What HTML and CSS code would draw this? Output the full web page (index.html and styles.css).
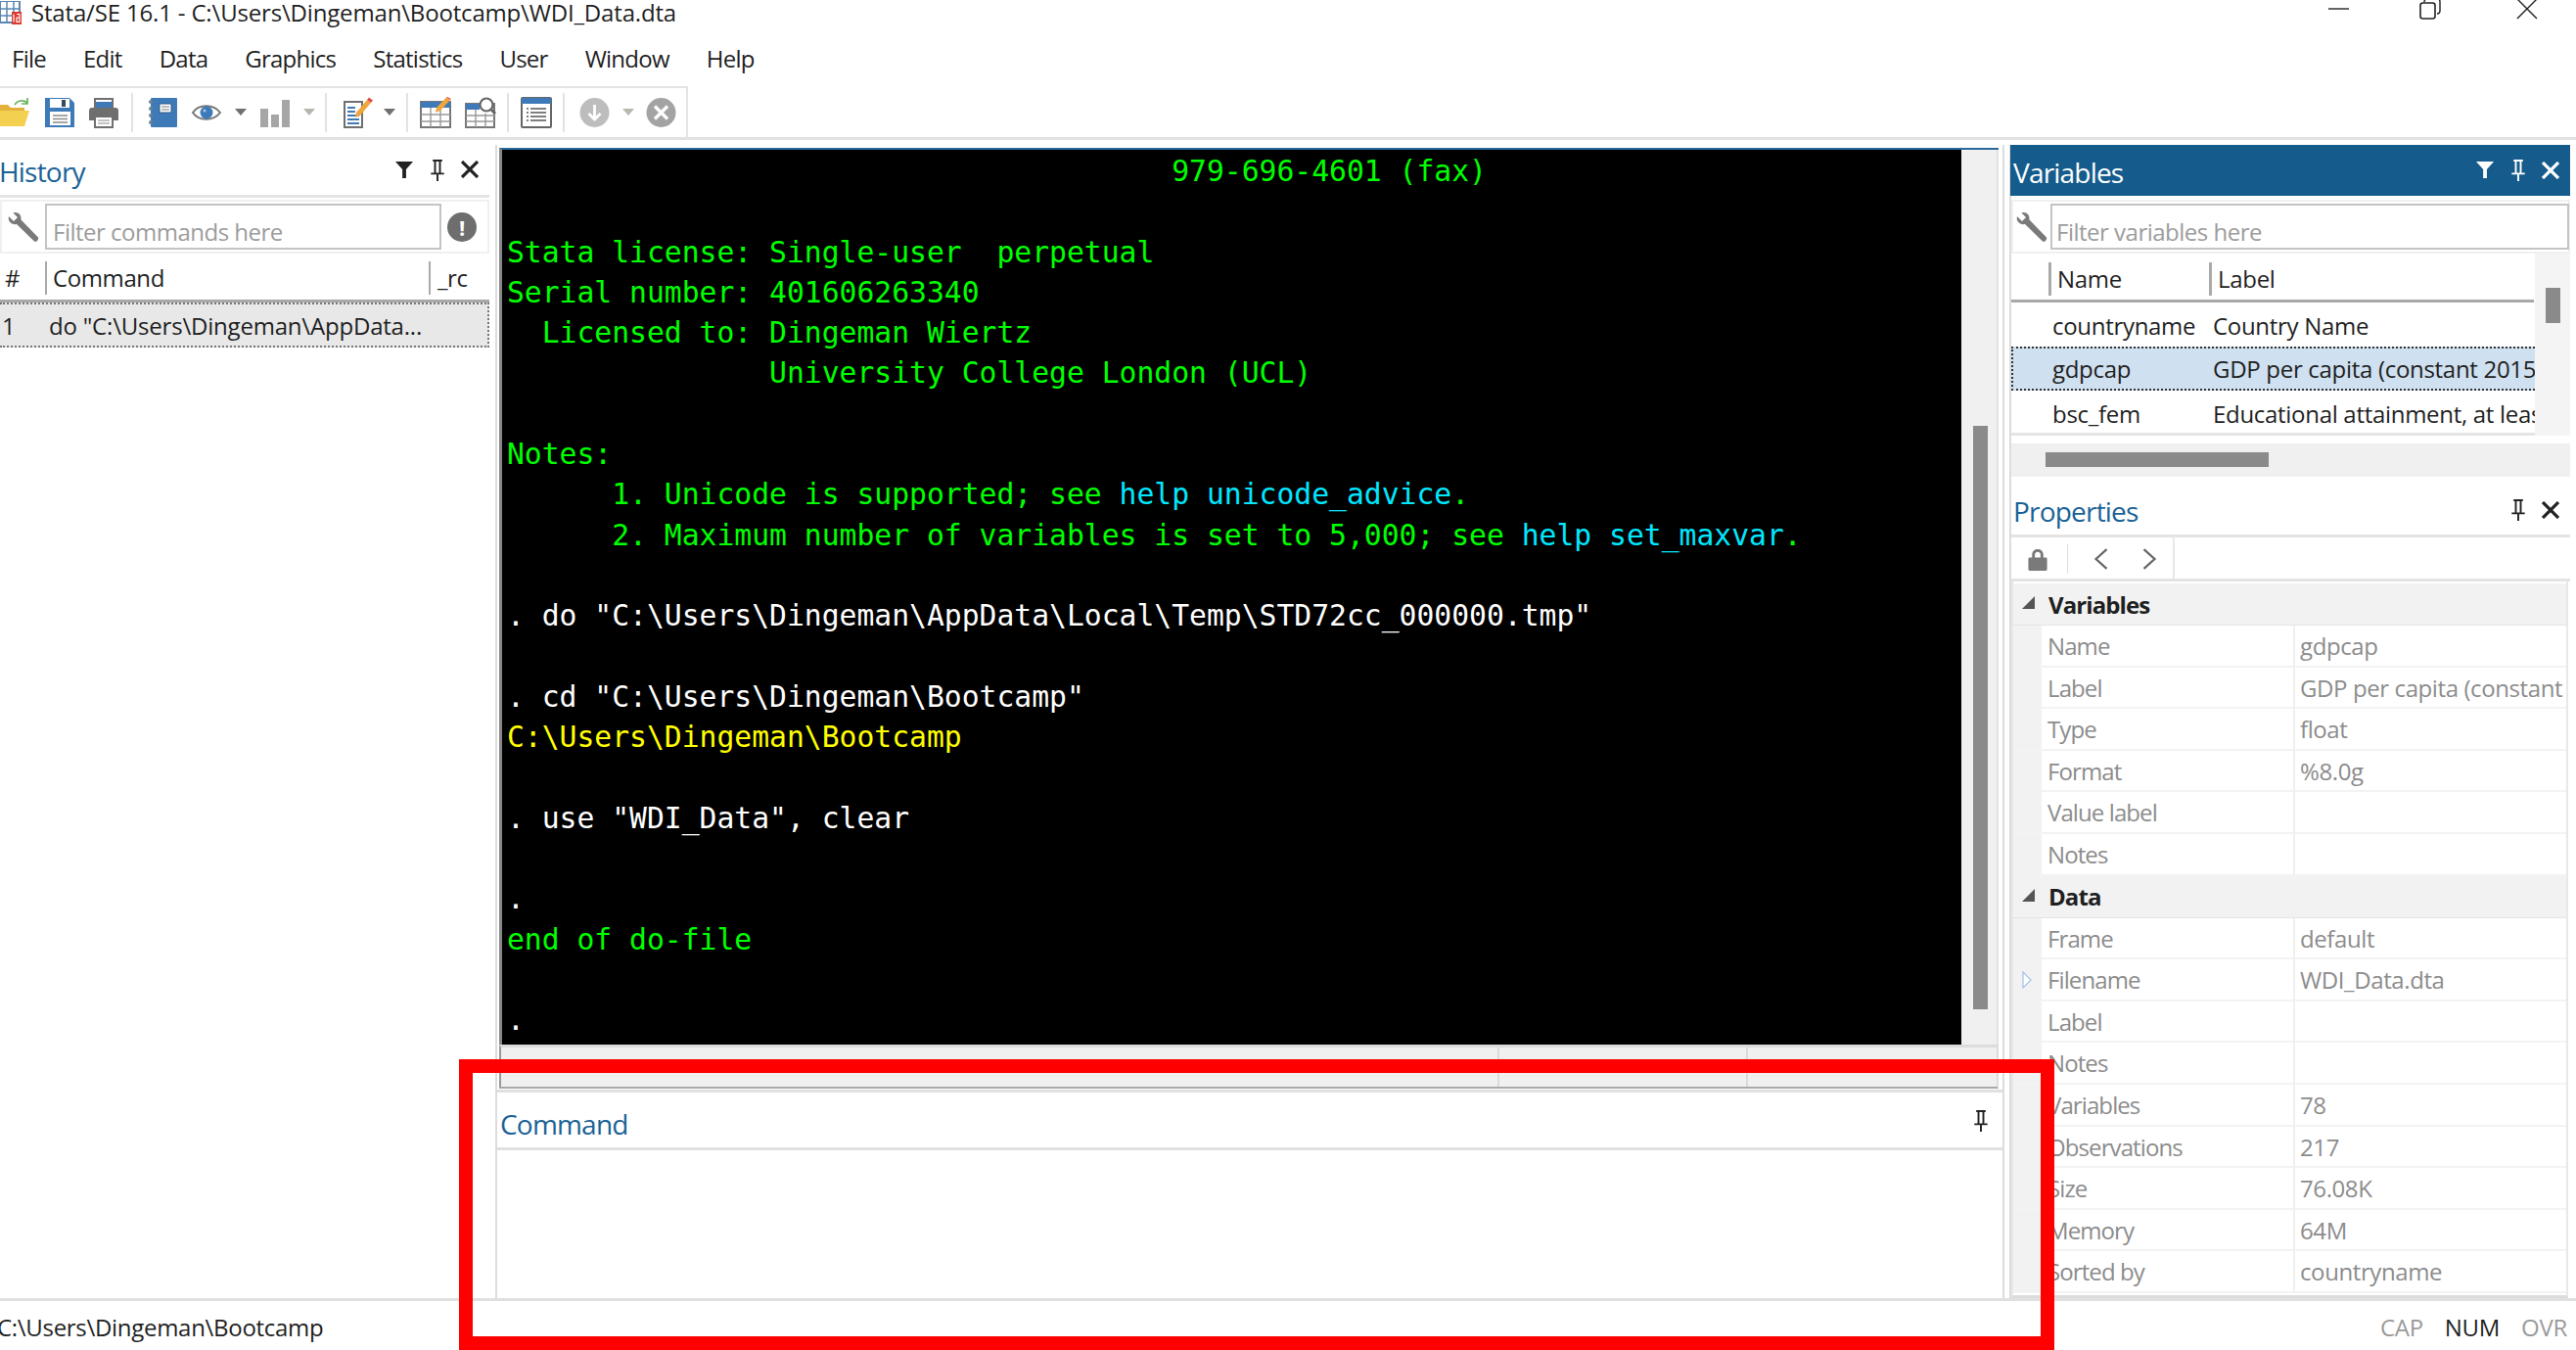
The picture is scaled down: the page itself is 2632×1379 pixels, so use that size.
FILE: index.html
```html
<!DOCTYPE html>
<html lang="en">
<head>
<meta charset="utf-8">
<title>Stata/SE 16.1</title>
<link rel="stylesheet" href="styles.css">
</head>
<body>
<svg class="defs" width="0" height="0" aria-hidden="true">
  <symbol id="funnel" viewBox="0 0 20 20"><path d="M0 1H19L11.5 9.5V19H7.5V9.5Z"/></symbol>
  <symbol id="pin" viewBox="0 0 18 24"><path d="M4 1H14V3H12.6V15H16V17H10V24H8V17H2V15H5.4V3H4ZM7.4 3V15H10.6V3Z"/></symbol>
  <symbol id="close" viewBox="0 0 18 18"><path d="M1 1L17 17M17 1L1 17" fill="none" stroke="currentColor" stroke-width="3.2"/></symbol>
  <symbol id="wrench" viewBox="0 0 34 32"><path d="M3 5L8 10L12 6L7.5 1.5C12 0 16 3 15.5 8.5L33 26.5C34 28.5 31 32 29 30.5L11 13C6 14 1.5 10 3 5Z" fill="#7a7a7a"/></symbol>
</svg>
<div class="app">
  <header class="titlebar">
    <svg class="app-icon" viewBox="0 0 22 24"><rect x="0" y="0" width="20" height="22" fill="#fff" stroke="#5b86b3" stroke-width="2"/><path d="M0 8H20M0 15H20M7 0V22M14 0V22" stroke="#5b86b3" stroke-width="1.5"/><rect x="12" y="11" width="10" height="13" fill="#d9382e"/><path d="M14 13.5V21.5M17 13.5H20V21.5H17V17H20" fill="none" stroke="#fff" stroke-width="1.2"/></svg>
    <span class="title-text">Stata/SE 16.1 - C:\Users\Dingeman\Bootcamp\WDI_Data.dta</span>
    <div class="win-controls">
      <svg class="win-min" width="22" height="20" viewBox="0 0 22 20"><path d="M0 9H21" stroke="#222" stroke-width="1.4"/></svg>
      <svg class="win-max" width="22" height="20" viewBox="0 0 22 20"><path d="M5 0V-1M5 2C5 0 6 -1 8 -1H19C20.500 -1 21 0 21 2V11C21 13 20 14 18 14" fill="none" stroke="#222" stroke-width="1.4"/><rect x="1" y="3" width="15" height="16" rx="2.500" fill="none" stroke="#222" stroke-width="1.6"/></svg>
      <svg class="win-close" width="22" height="20" viewBox="0 0 22 20"><path d="M1 -1L21 19M21 -1L1 19" stroke="#222" stroke-width="1.4"/></svg>
    </div>
  </header>

  <nav class="menubar">
    <span>File</span><span>Edit</span><span>Data</span><span>Graphics</span><span>Statistics</span><span>User</span><span>Window</span><span>Help</span>
  </nav>

  <div class="toolbar-row">
    <div class="toolbar">
      <svg class="tb" viewBox="0 0 32 32"><path d="M-2 8H8L11 11H25V17H-2Z" fill="#e3b13c"/><path d="M-2 14H30L25 30H-2Z" fill="#f3d04f"/><path d="M15 8C18 3 24 3 28 6M28 1V7H22" fill="none" stroke="#6cb35d" stroke-width="1.7"/></svg>
      <svg class="tb g13" viewBox="0 0 32 32"><path d="M1 1H26L31 6V31H1Z" fill="#3f7ab8"/><rect x="6" y="2" width="20" height="9" fill="#fff"/><rect x="18" y="3" width="4" height="7" fill="#3a4a5a"/><rect x="6" y="15" width="21" height="14" fill="#fff"/><path d="M9 19H24M9 22.500H24M9 26H24" stroke="#8a8a8a" stroke-width="1.400"/></svg>
      <svg class="tb g13" viewBox="0 0 32 32"><path d="M7 2H25V11H7Z" fill="#fff" stroke="#6f6f6f" stroke-width="2"/><rect x="8" y="5" width="16" height="7" fill="#3f7ab8"/><path d="M4 11H28C30 11 31 12 31 14V24H26V19H6V24H1V14C1 12 2 11 4 11Z" fill="#6f6f6f"/><rect x="7" y="20" width="18" height="11" fill="#fff" stroke="#6f6f6f" stroke-width="2"/><path d="M10 24H22M10 27H22" stroke="#8a8a8a"/></svg>
      <i class="tb-sep g12"></i>
      <svg class="tb g13" viewBox="0 0 32 32"><rect x="5" y="1" width="27" height="30" rx="1" fill="#3f7ab8"/><path d="M5 5V5.100M5 12V12.100M5 19V19.100M5 26V26.100" stroke="#6f7f8f" stroke-width="4" stroke-linecap="round"/><rect x="14" y="7" width="12" height="9" fill="#fff" stroke="#2f5a88"/><path d="M16 10H24M16 13H24" stroke="#777"/></svg>
      <svg class="tb g14" viewBox="0 0 32 32"><path d="M2 16C8 7 23 7 30 16C23 25 8 25 2 16Z" fill="#fff" stroke="#777" stroke-width="2"/><circle cx="16" cy="16" r="6.500" fill="#3f7ab8"/><circle cx="14" cy="14" r="1.500" fill="#a9c6e6"/></svg>
      <svg class="tb-drop g13" viewBox="0 0 12 8"><path d="M0 0H12L6 7Z" fill="#70706c"/></svg>
      <svg class="tb g13" viewBox="0 0 32 32"><path d="M1 12H9V31H1ZM12 18H20V31H12ZM23 3H31V31H23Z" fill="#a6a6a6"/></svg>
      <svg class="tb-drop g13" viewBox="0 0 12 8"><path d="M0 0H12L6 7Z" fill="#b9b6ae"/></svg>
      <i class="tb-sep g10"></i>
      <svg class="tb g16" viewBox="0 0 32 32"><path d="M2 5H20V31H2Z" fill="#fff" stroke="#6f6f6f" stroke-width="2"/><path d="M5 11H13M5 15H13M5 19H17M5 23H17M5 27H17" stroke="#3f7ab8" stroke-width="1.800"/><path d="M14 16L25 3L29 6L18 19L13 21Z" fill="#f0a63c"/><path d="M25 3L27 0.500L31 3.500L29 6Z" fill="#e04b4b"/></svg>
      <svg class="tb-drop g10" viewBox="0 0 12 8"><path d="M0 0H12L6 7Z" fill="#70706c"/></svg>
      <i class="tb-sep g11"></i>
      <svg class="tb g12" viewBox="0 0 32 32"><rect x="1" y="5" width="30" height="26" fill="#fff" stroke="#777" stroke-width="2"/><rect x="1" y="5" width="30" height="6" fill="#3f7ab8"/><path d="M1 18H31M1 25H31M11 11V31M21 11V31" stroke="#999" stroke-width="1.400"/><path d="M17 11L27 0.500L31 3L21 14L16 16Z" fill="#f0a63c"/><path d="M27 0.500L28 0L32 2L31 3Z" fill="#e04b4b"/></svg>
      <svg class="tb g14" viewBox="0 0 32 32"><rect x="1" y="7" width="29" height="24" fill="#fff" stroke="#777" stroke-width="2"/><rect x="1" y="7" width="14" height="6" fill="#3f7ab8"/><path d="M1 19H30M1 25H30M11 13V31M21 17V31" stroke="#999" stroke-width="1.400"/><circle cx="22" cy="8" r="6.500" fill="#fff" stroke="#666" stroke-width="2.200"/><path d="M27 13L31 17" stroke="#666" stroke-width="3"/></svg>
      <i class="tb-sep g11"></i>
      <svg class="tb g12" viewBox="0 0 32 32"><rect x="1" y="1" width="30" height="30" rx="1" fill="#fff" stroke="#666" stroke-width="2"/><rect x="1" y="1" width="30" height="6" fill="#3f7ab8"/><path d="M6 12H8M10 12H26M6 16H8M10 16H26M6 20H8M10 20H26M6 24H8M10 24H26" stroke="#555" stroke-width="1.500"/></svg>
      <i class="tb-sep g11"></i>
      <svg class="tb g15" viewBox="0 0 32 32"><circle cx="15.500" cy="16" r="15" fill="#bdbdbd"/><path d="M15.500 8V23M9.500 17L15.500 23L21.500 17" fill="none" stroke="#fff" stroke-width="2.800"/></svg>
      <svg class="tb-drop g12" viewBox="0 0 12 8"><path d="M0 0H12L6 7Z" fill="#b9b6ae"/></svg>
      <svg class="tb g12" viewBox="0 0 32 32"><circle cx="15.500" cy="16" r="15" fill="#a3a3a3"/><path d="M9 9.500L22 22.500M22 9.500L9 22.500" stroke="#fff" stroke-width="3.400"/></svg>
    </div>
  </div>

  <main class="workspace">
    <aside class="history">
      <div class="panel-head">
        <span class="panel-title first">History</span>
        <div class="head-icons">
          <svg class="ic-funnel"><use href="#funnel"/></svg>
          <svg class="ic-pin"><use href="#pin"/></svg>
          <svg class="ic-close"><use href="#close"/></svg>
        </div>
      </div>
      <div class="filter-row">
        <svg class="ic-wrench"><use href="#wrench"/></svg>
        <div class="filter-input">Filter commands here</div>
        <span class="warn">!</span>
      </div>
      <div class="col-head hist-cols">
        <span class="c-num">#</span>
        <span class="c-cmd">Command</span>
        <span class="c-rc">_rc</span>
      </div>
      <div class="hist-row">
        <span class="hr-num">1</span>
        <span class="hr-cmd">do "C:\Users\Dingeman\AppData...</span>
      </div>
    </aside>

    <section class="center">
      <div class="console-frame">
        <pre class="console"><span class="ln">                                      979-696-4601 (fax)</span>
<span class="ln"></span>
<span class="ln">Stata license: Single-user  perpetual</span>
<span class="ln">Serial number: 401606263340</span>
<span class="ln">  Licensed to: Dingeman Wiertz</span>
<span class="ln">               University College London (UCL)</span>
<span class="ln"></span>
<span class="ln">Notes:</span>
<span class="ln">      1. Unicode is supported; see <b class="link">help unicode_advice</b>.</span>
<span class="ln">      2. Maximum number of variables is set to 5,000; see <b class="link">help set_maxvar</b>.</span>
<span class="ln"></span>
<span class="ln input">. do "C:\Users\Dingeman\AppData\Local\Temp\STD72cc_000000.tmp"</span>
<span class="ln"></span>
<span class="ln input">. cd "C:\Users\Dingeman\Bootcamp"</span>
<span class="ln result">C:\Users\Dingeman\Bootcamp</span>
<span class="ln"></span>
<span class="ln input">. use "WDI_Data", clear</span>
<span class="ln"></span>
<span class="ln input">.</span>
<span class="ln">end of do-file</span>
<span class="ln"></span>
<span class="ln input">.</span></pre>
        <div class="vscroll"><i class="vthumb"></i></div>
      </div>
      <div class="console-foot">
        <i class="foot-a"></i><i class="foot-b"></i><i class="foot-c"></i>
      </div>
      <div class="command">
        <div class="panel-head cmd-head">
          <span class="panel-title cmd-title">Command</span>
          <div class="head-icons">
            <svg class="ic-pin"><use href="#pin"/></svg>
          </div>
        </div>
      </div>
    </section>

    <aside class="side">
      <div class="var-head">
        <span class="panel-title on-blue">Variables</span>
        <div class="head-icons white">
          <svg class="ic-funnel"><use href="#funnel"/></svg>
          <svg class="ic-pin"><use href="#pin"/></svg>
          <svg class="ic-close"><use href="#close"/></svg>
        </div>
      </div>
      <div class="filter-row var-filter">
        <svg class="ic-wrench"><use href="#wrench"/></svg>
        <div class="filter-input">Filter variables here</div>
      </div>
      <div class="var-table">
        <div class="var-main">
          <div class="col-head var-cols">
            <span class="v-name">Name</span>
            <span class="v-label">Label</span>
          </div>
          <div class="var-row"><span class="vr-name">countryname</span><span class="vr-label">Country Name</span></div>
          <div class="var-row sel"><span class="vr-name">gdpcap</span><span class="vr-label">GDP per capita (constant 2015</span></div>
          <div class="var-row"><span class="vr-name">bsc_fem</span><span class="vr-label">Educational attainment, at leas</span></div>
        </div>
        <div class="var-vscroll"><i></i></div>
      </div>
      <div class="var-hscroll"><i></i></div>

      <div class="prop-head">
        <span class="panel-title prop-title">Properties</span>
        <div class="head-icons">
          <svg class="ic-pin"><use href="#pin"/></svg>
          <svg class="ic-close"><use href="#close"/></svg>
        </div>
      </div>
      <div class="prop-tools">
        <div class="prop-toolbox">
          <svg class="ic-lock" viewBox="0 0 20 24"><path d="M4 11V7C4 -1 16 -1 16 7V11H13V7C13 3 7 3 7 7V11Z" fill="#7a7a7a"/><rect y="10" width="20" height="14" rx="1.500" fill="#7a7a7a"/></svg>
          <i class="pt-sep"></i>
          <svg class="ic-nav" viewBox="0 0 14 20"><path d="M12 1L2 10L12 19" fill="none" stroke="#666" stroke-width="2"/></svg>
          <svg class="ic-nav next" viewBox="0 0 14 20"><path d="M2 1L12 10L2 19" fill="none" stroke="#666" stroke-width="2"/></svg>
        </div>
      </div>
      <div class="prop-grid">
        <div class="prop-sec"><i class="tri"></i><span>Variables</span></div>
        <div class="prop-row"><span class="p-k">Name</span><span class="p-v">gdpcap</span></div>
        <div class="prop-row"><span class="p-k">Label</span><span class="p-v">GDP per capita (constant</span></div>
        <div class="prop-row"><span class="p-k">Type</span><span class="p-v">float</span></div>
        <div class="prop-row"><span class="p-k">Format</span><span class="p-v">%8.0g</span></div>
        <div class="prop-row"><span class="p-k">Value label</span><span class="p-v"></span></div>
        <div class="prop-row"><span class="p-k">Notes</span><span class="p-v"></span></div>
        <div class="prop-sec"><i class="tri"></i><span>Data</span></div>
        <div class="prop-row"><span class="p-k">Frame</span><span class="p-v">default</span></div>
        <div class="prop-row"><svg class="hollow" viewBox="0 0 10 18"><path d="M1 1L9 9L1 17Z" fill="#fff" stroke="#a9c4e6" stroke-width="1.300"/></svg><span class="p-k">Filename</span><span class="p-v">WDI_Data.dta</span></div>
        <div class="prop-row"><span class="p-k">Label</span><span class="p-v"></span></div>
        <div class="prop-row"><span class="p-k">Notes</span><span class="p-v"></span></div>
        <div class="prop-row"><span class="p-k">Variables</span><span class="p-v">78</span></div>
        <div class="prop-row"><span class="p-k">Observations</span><span class="p-v">217</span></div>
        <div class="prop-row"><span class="p-k">Size</span><span class="p-v">76.08K</span></div>
        <div class="prop-row"><span class="p-k">Memory</span><span class="p-v">64M</span></div>
        <div class="prop-row"><span class="p-k">Sorted by</span><span class="p-v">countryname</span></div>
      </div>
    </aside>
  </main>

  <footer class="statusbar">
    <span class="status-path">C:\Users\Dingeman\Bootcamp</span>
    <div class="status-keys">
      <span class="off">CAP</span><span>NUM</span><span class="off">OVR</span>
    </div>
  </footer>

  <div class="red-box"></div>
</div>
</body>
</html>
```
FILE: styles.css
```css
* { box-sizing: border-box; }
html, body { margin: 0; padding: 0; background: #fff; overflow: hidden; }
.defs { position: absolute; }
.app {
  position: relative;
  width: 2632px;
  height: 1379px;
  overflow: hidden;
  display: flex;
  flex-direction: column;
  font-family: "Open Sans", "Noto Sans", sans-serif;
  font-size: 24px;
  letter-spacing: -0.4px;
  color: #1f1f1f;
}

/* title + menu */
.titlebar { height: 26px; display: flex; align-items: center; position: relative; flex: none; }
.app-icon { width: 22px; height: 24px; margin-right: 10px; flex: none; }
.title-text { line-height: 26px; white-space: nowrap; letter-spacing: -0.17px; }
.win-controls { margin-left: auto; display: flex; align-items: flex-start; height: 26px; padding-right: 39px; }
.win-min { margin-right: 71px; }
.win-max { margin-right: 77px; }

.menubar { height: 62px; flex: none; display: flex; gap: 38px; align-items: center; padding: 5px 0 0 12px; letter-spacing: -0.75px; }

/* toolbar */
.toolbar-row { height: 55px; flex: none; border-bottom: 3px solid #e2e2e2; }
.toolbar {
  width: 703px; height: 52px;
  border: solid #e4e4e4; border-width: 2px 2px 0 0;
  display: flex; align-items: center;
}
.tb { width: 32px; height: 32px; flex: none; overflow: visible; }
.tb-drop { width: 12px; height: 8px; flex: none; }
.tb-sep { width: 2px; height: 40px; background: #e2e2e2; flex: none; }
.g10 { margin-left: 10px; } .g11 { margin-left: 11px; } .g12 { margin-left: 12px; }
.g13 { margin-left: 13px; } .g14 { margin-left: 14px; } .g15 { margin-left: 15px; } .g16 { margin-left: 16px; }

/* workspace */
.workspace { flex: 1; display: flex; min-height: 0; border-bottom: 3px solid #e0e0e0; padding-top: 5px; }
.history { width: 508px; flex: none; border-right: 2px solid #dcdcdc; padding-right: 6px; }

.panel-head { height: 54px; display: flex; align-items: center; border-bottom: 3px solid #e4e4e4; }
.panel-title { font-size: 28px; letter-spacing: -0.8px; color: #1a6296; white-space: nowrap; padding-top: 3px; }
.panel-title.first { margin-left: -1px; }
.head-icons { margin-left: auto; display: flex; align-items: center; color: #222; fill: #222; padding-bottom: 1px; }
.head-icons.white { color: #fff; fill: #fff; }
.ic-funnel { width: 19px; height: 19px; margin-right: 15px; }
.ic-pin { width: 18px; height: 23px; margin-right: 15px; }
.ic-close { width: 18px; height: 18px; margin-right: 11px; }

.filter-row { height: 55px; display: flex; align-items: center; border: 2px solid #f0f0f0; padding-left: 4px; margin-top: 2px; letter-spacing: -0.5px; }
.ic-wrench { width: 34px; height: 32px; flex: none; }
.filter-input {
  width: 405px; height: 47px; margin-left: 6px;
  border: 2px solid #c4c4c4; color: #9c9c9c;
  padding: 10px 0 0 6px; line-height: 34px; flex: none;
}
.warn {
  width: 30px; height: 30px; margin-left: 6px; border-radius: 50%;
  background: #6e6e6e; color: #fff; font-size: 22px; line-height: 30px;
  text-align: center; font-weight: 700; flex: none;
}

.col-head { height: 50px; position: relative; display: flex; align-items: center; border-bottom: 3px solid #a8a8a8; }
.hist-cols span { position: absolute; top: 8px; line-height: 34px; white-space: nowrap; }
.c-num { left: 5px; width: 41px; }
.c-cmd { left: 46px; width: 392px; padding-left: 6px; border-left: 2px solid #aaa; }
.c-rc { left: 438px; padding-left: 7px; border-left: 2px solid #aaa; }

.hist-row {
  height: 46px; background: #e8e8e8; border: 2px dotted #777;
  border-left-width: 0; display: flex; align-items: center; white-space: nowrap; letter-spacing: -0.2px;
}
.hr-num { width: 50px; padding-left: 2px; flex: none; }

/* centre */
.center { width: 1540px; flex: none; display: flex; flex-direction: column; border-right: 2px solid #dcdcdc; padding-right: 0; }
.console-frame {
  margin: 3px 4px 0 2px; height: 916px; flex: none;
  border-top: 2px solid #2a6a9a; border-left: 3px solid #888;
  display: flex; position: relative;
}
.console {
  margin: 0; width: 1491px; height: 914px; flex: none;
  background: #000; color: #00ff00; padding: 1px 0 0 5px;
  font-family: "DejaVu Sans Mono", "Liberation Mono", monospace;
  font-size: 29.7px; letter-spacing: 0; line-height: 41.3px;
  overflow: hidden; white-space: pre;
}
.ln { display: inline; }
.input { color: #fff; }
.result { color: #ffff00; }
.link { color: #00e8ff; font-weight: 400; }
.vscroll { flex: 1; background: #f0f0f0; padding: 282px 0 0 12px; border-right: 2px solid #e2e2e2; }
.vthumb { display: block; width: 15px; height: 596px; background: #8a8a8a; }

.console-foot {
  height: 45px; margin: 0 4px 0 2px; flex: none; background: #f0f0f0;
  border: solid #dcdcdc; border-width: 3px 2px 2px 2px; border-bottom-color: #a8a8a8; border-left-color: #999;
  display: flex;
}
.console-foot i { display: block; height: 100%; border-right: 2px solid #dadada; }
.foot-a { width: 1020px; }
.foot-b { width: 254px; }
.foot-c { flex: 1; border-right: 0 !important; }

.command { flex: 1; border-top: 3px solid #e0e0e0; margin-top: 1px; }
.cmd-head { height: 59px; padding-left: 3px; border-bottom: 3px solid #e0e0e0; }
.cmd-title { padding-top: 8px; }
.cmd-head .head-icons { padding: 0 5px 0 0; }
.cmd-head .ic-pin { margin-right: 8px; }

/* right side */
.side { width: 573px; flex: none; margin-left: 5px; border-left: 2px solid #dcdcdc; }
.var-head { height: 52px; background: #155c8d; display: flex; align-items: center; margin-left: -1px; margin-top: 0; }
.on-blue { color: #fff; padding-left: 3px; }
.var-filter { margin-top: 4px; padding-left: 1px; }
.var-filter .filter-input { width: 530px; margin-left: 3px; padding-left: 4px; }
.var-table { display: flex; height: 186px; }
.var-main { width: 535px; flex: none; border-bottom: 3px solid #e4e4e4; height: 186px; letter-spacing: -0.3px; }
.var-vscroll { flex: 1; background: #f4f4f4; padding: 35px 0 0 11px; }
.var-vscroll i { display: block; width: 15px; height: 36px; background: #8a8a8a; }
.var-cols { width: 534px; }
.var-cols span { position: absolute; top: 9px; line-height: 34px; border-left: 3px solid #aaa; padding-left: 6px; }
.v-name { left: 38px; }
.v-label { left: 202px; }
.var-row { height: 45px; display: flex; align-items: center; white-space: nowrap; overflow: hidden; width: 535px; padding-top: 2px; }
.var-row.sel { background: #cfe0f0; border: 2px dotted #333; border-right: 0; padding-top: 0; }
.vr-name { width: 206px; padding-left: 42px; flex: none; }
.var-row.sel .vr-name { width: 204px; padding-left: 40px; }
.var-hscroll { height: 34px; margin-top: 8px; background: #f0f0f0; padding: 9px 0 0 35px; }
.var-hscroll i { display: block; width: 228px; height: 15px; background: #8a8a8a; }

.prop-head { height: 62px; display: flex; align-items: center; border-bottom: 3px solid #e4e4e4; }
.prop-title { padding-left: 2px; padding-top: 11px; }
.prop-head .head-icons { padding-top: 8px; padding-bottom: 0; }
.prop-tools { height: 45px; border-bottom: 3px solid #e4e4e4; }
.prop-toolbox { width: 167px; height: 42px; border-right: 2px solid #e8e8e8; display: flex; align-items: center; padding: 2px 0 0 17px; }
.ic-lock { width: 20px; height: 23px; flex: none; }
.pt-sep { width: 1px; height: 30px; background: #ddd; margin-left: 20px; flex: none; }
.ic-nav { width: 18px; height: 22px; margin-left: 25px; flex: none; }
.ic-nav.next { margin-left: 31px; }

.prop-grid { width: 569px; padding: 2px 0; border-bottom: 3px solid #dcdcdc; border-right: 2px solid #e8e8e8; border-left: 2px solid #e8e8e8; letter-spacing: -0.9px; }
.prop-sec {
  height: 43px; background: #f2f2f2; display: flex; align-items: center;
  font-weight: 700; color: #1f1f1f; position: relative; padding-left: 36px;
  border-bottom: 1px solid #e4e4e4;
}
.tri {
  position: absolute; left: 9px; top: 13px; width: 0; height: 0;
  border-style: solid; border-width: 0 0 13px 13px; border-color: transparent transparent #555 transparent;
}
.prop-row {
  height: 42.6px; display: flex; align-items: center; padding-left: 29px;
  background: linear-gradient(#f2f2f2, #f2f2f2) no-repeat left / 29px 100%;
  color: #8c8c8c; position: relative; white-space: nowrap; overflow: hidden;
}
.p-k { width: 257px; padding-left: 6px; height: 100%; line-height: 41px; flex: none; border-bottom: 2px solid #f3f3f3; }
.p-v { flex: 1; height: 100%; padding-left: 5px; line-height: 41px; border-left: 2px solid #f0f0f0; border-bottom: 2px solid #f3f3f3; overflow: hidden; letter-spacing: -0.4px; }
.hollow { position: absolute; left: 9px; top: 12px; width: 10px; height: 18px; }

/* status */
.statusbar { height: 50px; flex: none; display: flex; align-items: center; padding-top: 3px; letter-spacing: -0.3px; }
.status-path { margin-left: -3px; white-space: nowrap; }
.status-keys { margin-left: auto; display: flex; gap: 22px; padding-right: 9px; }
.status-keys .off { color: #9a9a9a; }

/* red annotation drawn over the screenshot */
.red-box { position: absolute; left: 469px; top: 1082px; width: 1630px; height: 297px; border: 14px solid #ff0000; }
```
